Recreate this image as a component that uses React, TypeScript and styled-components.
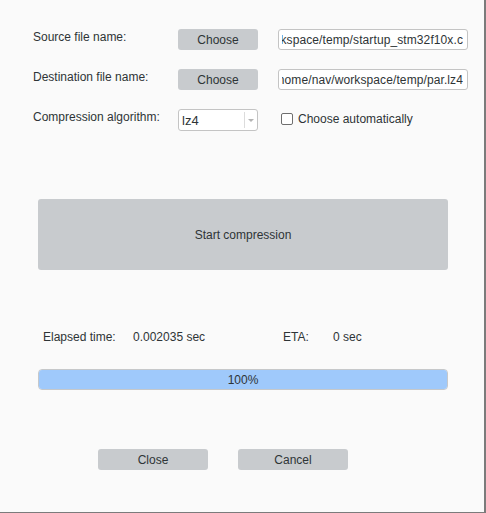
import styled, { createGlobalStyle } from "styled-components"

const GlobalStyle = createGlobalStyle`
  html, body {
    margin: 0;
    padding: 0;
    background: #fafafa;
  }
  body {
    font-family: "Liberation Sans", Arial, sans-serif;
    font-size: 12px;
    color: #2e3436;
  }
`

const Window = styled.div`
  width: 486px;
  height: 513px;
  box-sizing: border-box;
  background: #fafafa;
  border-right: 2px solid #7b7b7b;
  border-bottom: 1px solid #7b7b7b;
  display: flex;
  flex-direction: column;
`

const Form = styled.div`
  display: grid;
  grid-template-columns: 125px 80px 190px;
  column-gap: 20px;
  row-gap: 19px;
  padding: 29px 0 0 33px;
`

const Label = styled.div`
  line-height: 14px;
  margin-top: 1px;
  white-space: nowrap;
`

const Button = styled.button<{ $w?: number; $h?: number }>`
  width: ${(p) => (p.$w ? `${p.$w}px` : "100%")};
  height: ${(p) => p.$h ?? 21}px;
  border: none;
  border-radius: 3px;
  background: #c8cbce;
  color: #2e3436;
  font-family: inherit;
  font-size: 12px;
  padding: 0;
  cursor: pointer;
`

const PathField = styled.div`
  height: 21px;
  box-sizing: border-box;
  border: 1px solid #c4c4c4;
  border-radius: 3px;
  background: #fff;
  display: flex;
  align-items: center;
  padding: 0 4px 0 3px;
`

const PathText = styled.div`
  flex: 1;
  display: flex;
  justify-content: flex-end;
  overflow: hidden;
  white-space: nowrap;
  letter-spacing: 0.1px;
`

const Select = styled.div`
  height: 22px;
  box-sizing: border-box;
  border: 1px solid #c4c4c4;
  border-radius: 3px;
  background: #fff;
  display: flex;
  align-items: stretch;
`

const SelectValue = styled.div`
  flex: 1;
  display: flex;
  align-items: center;
  padding-left: 3px;
  font-size: 13px;
`

const SelectArrow = styled.div`
  width: 12px;
  margin: 2px 0;
  border-left: 1px solid #dcdcdc;
  display: flex;
  align-items: center;
  justify-content: center;

  &::after {
    content: "";
    border-left: 3px solid transparent;
    border-right: 3px solid transparent;
    border-top: 3px solid #b4b4b4;
  }
`

const CheckRow = styled.label`
  align-self: start;
  display: flex;
  align-items: center;
  gap: 5px;
  height: 14px;
  padding-left: 3px;
  margin-top: 3px;
`

const CheckBox = styled.span`
  width: 12px;
  height: 12px;
  box-sizing: border-box;
  border: 1px solid #6e6e6e;
  border-radius: 2px;
  background: #fff;
`

const StartArea = styled.div`
  padding: 68px 0 0 38px;
`

const Stats = styled.div`
  display: grid;
  grid-template-columns: 90px 150px 50px auto;
  padding: 60px 0 0 43px;
  line-height: 14px;
`

const Progress = styled.div`
  margin: 25px 0 0 38px;
  width: 410px;
  height: 21px;
  box-sizing: border-box;
  border: 1px solid #c6c8ca;
  border-radius: 4px;
  background: #fafafa;
  position: relative;
  overflow: hidden;
`

const ProgressFill = styled.div`
  height: 100%;
  background: #9fc9fb;
`

const ProgressText = styled.span`
  position: absolute;
  inset: 0;
  display: flex;
  align-items: center;
  justify-content: center;
`

const Footer = styled.div`
  display: flex;
  gap: 30px;
  padding: 59px 0 0 98px;
`

export default function App() {
  const percent = 100

  return (
    <>
      <GlobalStyle />
      <Window>
        <Form>
          <Label>Source file name:</Label>
          <Button>Choose</Button>
          <PathField>
            <PathText>/home/nav/workspace/temp/startup_stm32f10x.c</PathText>
          </PathField>

          <Label>Destination file name:</Label>
          <Button>Choose</Button>
          <PathField>
            <PathText>/home/nav/workspace/temp/par.lz4</PathText>
          </PathField>

          <Label>Compression algorithm:</Label>
          <Select>
            <SelectValue>lz4</SelectValue>
            <SelectArrow />
          </Select>
          <CheckRow>
            <CheckBox />
            Choose automatically
          </CheckRow>
        </Form>

        <StartArea>
          <Button $w={410} $h={71}>Start compression</Button>
        </StartArea>

        <Stats>
          <span>Elapsed time:</span>
          <span>0.002035 sec</span>
          <span>ETA:</span>
          <span>0 sec</span>
        </Stats>

        <Progress>
          <ProgressFill style={{ width: `${percent}%` }} />
          <ProgressText>{percent}%</ProgressText>
        </Progress>

        <Footer>
          <Button $w={110}>Close</Button>
          <Button $w={110}>Cancel</Button>
        </Footer>
      </Window>
    </>
  )
}
